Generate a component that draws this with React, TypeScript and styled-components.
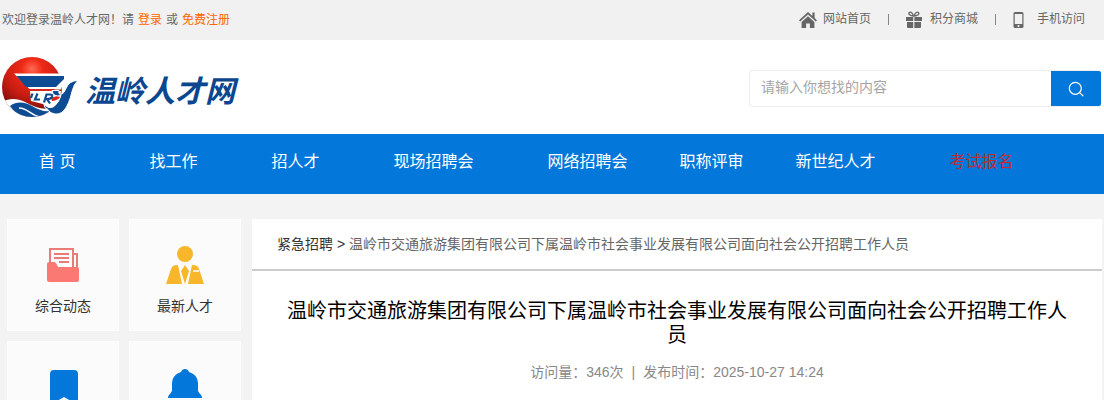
import React from "react";
import styled, { createGlobalStyle } from "styled-components";

const BLUE = "#0478da";

const GlobalStyle = createGlobalStyle`
  * { box-sizing: border-box; }
  body {
    margin: 0;
    background: #f3f3f3;
    color: #333;
    font: 400 14px/20px "Liberation Sans", "Noto Sans CJK SC", sans-serif;
  }
  a { color: inherit; text-decoration: none; }
  svg { display: block; flex: none; }
`;

const Container = styled.div`
  max-width: 1100px;
  margin: 0 auto;
`;

const TopBar = styled.div`
  background: #f1f1f1;
  color: #666;
  font-size: 12px;
`;

const TopInner = styled(Container)`
  display: flex;
  justify-content: space-between;
  align-items: center;
  height: 40px;
`;

const Welcome = styled.div`
  display: flex;
  gap: 4px;
`;

const AccentLink = styled.a`
  color: #ff6600;
`;

const QuickLinks = styled.nav`
  display: flex;
  padding: 0 17px 2px 0;
`;

const QuickLink = styled.a`
  display: flex;
  align-items: center;

  & + &::before {
    content: "";
    width: 1px;
    height: 11px;
    margin: 0 17px;
    background: #888;
  }
`;

const IconSlot = styled.span`
  width: 24px;
  height: 18px;
  margin-top: 2px;
`;

const Header = styled.header`
  background: #fff;
`;

const HeaderInner = styled(Container)`
  display: flex;
  justify-content: space-between;
  align-items: center;
  height: 94px;
  padding-right: 1px;
`;

const Logo = styled.a`
  display: flex;
  align-items: center;
  gap: 6px;
  color: #0b4690;
`;

const LogoName = styled.span`
  padding-top: 4px;
  font: italic 700 30px/36px "Noto Sans CJK SC", sans-serif;
`;

const SearchForm = styled.form`
  display: flex;
  width: 352px;
  height: 37px;
  margin-top: 3px;
  border: 1px solid #eee;
  border-right: 0;
  border-radius: 3px;
`;

const SearchInput = styled.input`
  flex: 1;
  min-width: 0;
  padding: 0 11px 3px;
  border: 0;
  outline: 0;
  background: transparent;
  font: inherit;

  &::placeholder {
    color: #a5a5a5;
    opacity: 1;
  }
`;

const SearchButton = styled.button`
  display: flex;
  align-items: center;
  justify-content: center;
  width: 50px;
  padding: 0;
  border: 0;
  border-radius: 0 2px 2px 0;
  background: ${BLUE};
  cursor: pointer;
`;

const NavBar = styled.nav`
  background: ${BLUE};
`;

const NavInner = styled(Container)`
  display: flex;
  height: 60px;
`;

const NavLink = styled.a<{ $tight?: boolean; $hot?: boolean }>`
  padding: 0 ${(p) => (p.$tight ? 15 : 37)}px;
  color: ${(p) => (p.$hot ? "#c42a32" : "#fff")};
  font-size: 16px;
  line-height: 56px;
  white-space: nowrap;
`;

const Main = styled(Container)`
  display: flex;
  gap: 11px;
  padding-top: 25px;
`;

const CardGrid = styled.aside`
  display: grid;
  grid-template-columns: 112px 112px;
  grid-auto-rows: 112px;
  gap: 10px;
  padding-left: 5px;
`;

const Card = styled.a`
  display: flex;
  flex-direction: column;
  align-items: center;
  gap: 11px;
  padding-top: 25px;
  border: 1px solid #fefefe;
  background: #fbfbfb;
`;

const Article = styled.article`
  flex: 1;
  min-width: 0;
  min-height: 230px;
  background: #fff;
`;

const Breadcrumb = styled.div`
  padding: 15px 25px;
  border-bottom: 2px solid #ccc;
`;

const Current = styled.span`
  color: #666;
`;

const Title = styled.h1`
  margin: 0;
  padding: 28px 30px 0;
  color: #000;
  font-size: 20px;
  font-weight: 400;
  line-height: 24px;
  text-align: center;
`;

const Meta = styled.div`
  display: flex;
  justify-content: center;
  gap: 8px;
  padding-top: 15px;
  color: #888;
`;

const HomeIcon = () => (
  <svg width="18" height="18" viewBox="0 0 18 18" fill="#666">
    <path d="M9 1 0 9.3l1.2 1.3L9 3.6l7.8 7 1.2-1.3-2.4-2.2V1.5h-2.2v3.6z" />
    <path d="M9 5.2 2.6 11v6h4.5v-4.4h3.8V17h4.5v-6z" />
  </svg>
);

const GiftIcon = () => (
  <svg width="16" height="18" viewBox="0 0 16 18" fill="#666">
    <path d="M0 6h7.2v4H0zM8.4 6H16v4H8.4zM1 11h6.2v6H2q-1 0-1-1zM8.4 11H15v5q0 1-1 1H8.4z" />
    <path d="M7.5 5C6.5 1.5 4.5.5 3.3 1.5 2 3 4 5 7.5 5zM8.2 5c1-3.5 3-4.5 4.2-3.5C13.7 3 11.7 5 8.2 5z" fill="none" stroke="#666" strokeWidth="1.3" />
  </svg>
);

const PhoneIcon = () => (
  <svg width="11" height="18" viewBox="0 0 11 18">
    <path fillRule="evenodd" fill="#666" d="M2 1h7q1.5 0 1.5 1.5v13Q10.5 17 9 17H2Q.5 17 .5 15.5v-13Q.5 1 2 1zM1.7 3v10h7.6V3zM5.5 14a1 1 0 1 0 .01 0z" />
  </svg>
);

const SearchIcon = () => (
  <svg width="16" height="16" viewBox="0 0 16 16" fill="none" stroke="#fff" strokeWidth="1.2" strokeLinecap="round">
    <circle cx="7.3" cy="7.3" r="6" />
    <path d="m11.6 11.6 3.3 3.2" />
  </svg>
);

const LogoMark = () => (
  <svg width="77" height="62" viewBox="0 0 77 62">
    <defs>
      <radialGradient id="sun" cx="0.5" cy="0.2" r="0.7">
        <stop offset="0" stopColor="#ff6a50" />
        <stop offset="0.25" stopColor="#ee2a17" />
        <stop offset="0.65" stopColor="#c91c12" />
        <stop offset="1" stopColor="#80100c" />
      </radialGradient>
      <clipPath id="disc">
        <circle cx="30" cy="31" r="30" />
      </clipPath>
    </defs>
    <circle cx="30" cy="31" r="30" fill="url(#sun)" />
    <g clipPath="url(#disc)">
      <path d="M0 46c9-5 17-3 25 1s15 7 24 5l12-6v20H0z" fill="#fff" />
      <path d="M8 50c7-5 15-4 22 0s12 6 19 5l3 3c-8 6-32 10-44-8z" fill="#0d4b93" />
      <path d="M17 52c9 0 11 7 21 9" fill="none" stroke="#fff" strokeWidth="1.5" />
    </g>
    {/* hull */}
    <path d="M12 17.5h52v5l-3 5-2 6H28l-2-2z" fill="#fff" />
    <path d="M28 35h31l-2 14-10 4-6-5-12-3z" fill="#fff" />
    <path d="M14.500 20H62v3q-4 4-8 8H24z" fill="#0d4b93" />
    <path d="M25 33h28l-1 2H27zM49 42l6-2 4 1q-5 4-9 4z" fill="#d8261a" />
    {/* cargo marks under the hull */}
    <path d="M30.500 37.500 29 42M35.500 37.500 33 43.500h5M42 46.500l2.500-8h3.500q3 0 2 2.500-1 2-5 2l3 4.500" fill="none" stroke="#0d4b93" strokeWidth="2.2" />
    {/* anchor-shaped bow */}
    <path d="M50 34.500h7q-1 4 2 4 3-1 5-6 3-8 12-8-4 3-6 11-3 13-8 19-5 5-11 3-4-1-5-4-4-1-4-5 5 5 10 2 5-4 7-11-8 2-9-5z" fill="#0d4b93" stroke="#fff" strokeWidth="1" />
  </svg>
);

const FolderIcon = () => (
  <svg width="40" height="40" viewBox="-3 0 40 40">
    <path d="M4 22V4h23v22M27 9h4v17" fill="none" stroke="#e97c77" strokeWidth="2" />
    <path d="M8 9h15M8 13h15M13 17h10" stroke="#e97c77" strokeWidth="2" />
    <path d="M3 17h5q2 0 4 5h19q2 0 2 2v11q0 2-2 2H3q-2 0-2-2V19q0-2 2-2z" fill="#fb7973" />
  </svg>
);

const PersonIcon = () => (
  <svg width="40" height="40" viewBox="0 0 40 40" fill="#f8b62b">
    <circle cx="20" cy="9" r="8" />
    <path d="M8 21q1-1 5-1l4 19H1l5-15q1-2 2-3zM32 21q-1-1-5-1l-4 19h16l-5-15q-1-2-2-3zM20 20l4 6-4 13-4-13z" />
    <path d="M28 26h6" stroke="#fff" strokeWidth="1.5" />
  </svg>
);

const BookmarkIcon = () => (
  <svg width="40" height="40" viewBox="-1 0 40 40" fill={BLUE}>
    <path d="M10 3h20q4 0 4 4v31L20 30 6 38V7q0-4 4-4z" />
  </svg>
);

const BellIcon = () => (
  <svg width="40" height="40" viewBox="0 0 40 40" fill={BLUE}>
    <path d="M20 2q3 0 4 3 9 3 9 11v8q1 2 3 4 1 1 1 3H3q0-2 1-3 2-2 3-4v-8q0-8 9-11 1-3 4-3zM15 33h10q-5 7-10 0z" />
  </svg>
);

const quickLinks = [
  { label: "网站首页", Icon: HomeIcon },
  { label: "积分商城", Icon: GiftIcon },
  { label: "手机访问", Icon: PhoneIcon },
];

const navItems = [
  { label: "首 页" },
  { label: "找工作" },
  { label: "招人才" },
  { label: "现场招聘会" },
  { label: "网络招聘会" },
  { label: "职称评审", tight: true },
  { label: "新世纪人才" },
  { label: "考试报名", hot: true },
];

const cards = [
  { label: "综合动态", Icon: FolderIcon },
  { label: "最新人才", Icon: PersonIcon },
  { label: "", Icon: BookmarkIcon },
  { label: "", Icon: BellIcon },
];

const headline = "温岭市交通旅游集团有限公司下属温岭市社会事业发展有限公司面向社会公开招聘工作人员";

export default function App() {
  return (
    <>
      <GlobalStyle />
      <TopBar>
        <TopInner>
          <Welcome>
            <span>欢迎登录温岭人才网！请</span>
            <AccentLink href="#login">登录</AccentLink>
            <span>或</span>
            <AccentLink href="#register">免费注册</AccentLink>
          </Welcome>
          <QuickLinks>
            {quickLinks.map(({ label, Icon }) => (
              <QuickLink href="#" key={label}>
                <IconSlot><Icon /></IconSlot>
                {label}
              </QuickLink>
            ))}
          </QuickLinks>
        </TopInner>
      </TopBar>
      <Header>
        <HeaderInner>
          <Logo href="#">
            <LogoMark />
            <LogoName>温岭人才网</LogoName>
          </Logo>
          <SearchForm>
            <SearchInput type="text" aria-label="搜索" placeholder="请输入你想找的内容" />
            <SearchButton type="button" aria-label="搜索"><SearchIcon /></SearchButton>
          </SearchForm>
        </HeaderInner>
      </Header>
      <NavBar>
        <NavInner>
          {navItems.map((item) => (
            <NavLink href="#" key={item.label} $tight={item.tight} $hot={item.hot}>{item.label}</NavLink>
          ))}
        </NavInner>
      </NavBar>
      <Main>
        <CardGrid>
          {cards.map(({ label, Icon }, i) => (
            <Card href="#" key={i}>
              <Icon />
              {label && <span>{label}</span>}
            </Card>
          ))}
        </CardGrid>
        <Article>
          <Breadcrumb>
            <a href="#">紧急招聘</a> &gt; <Current>{headline}</Current>
          </Breadcrumb>
          <Title>{headline}</Title>
          <Meta>
            <span>访问量：346次</span>
            <span>|</span>
            <span>发布时间：2025-10-27 14:24</span>
          </Meta>
        </Article>
      </Main>
    </>
  );
}
